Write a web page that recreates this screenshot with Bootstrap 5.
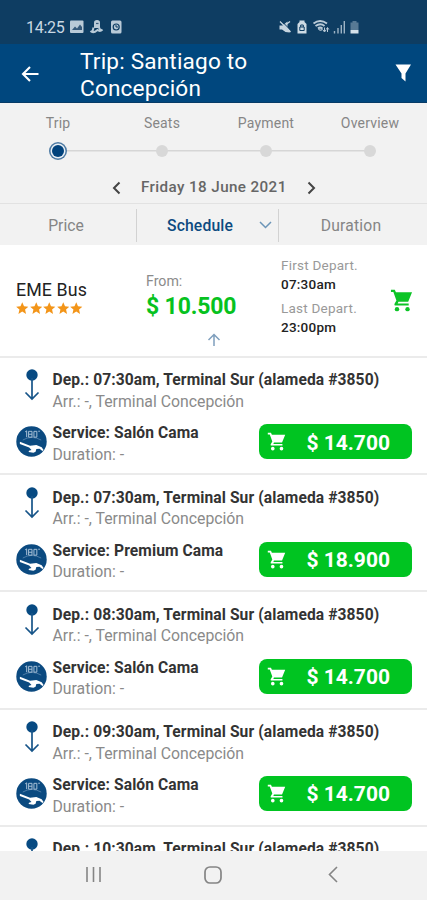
<!DOCTYPE html>
<html lang="en">
<head>
<meta charset="utf-8">
<meta name="viewport" content="width=device-width, initial-scale=1">
<title>Trip: Santiago to Concepción</title>
<link href="https://cdn.jsdelivr.net/npm/bootstrap@5.3.0/dist/css/bootstrap.min.css" rel="stylesheet">
<style>
  body { font-family: Roboto, "Liberation Sans", sans-serif; color: #333; background: #fff; }
  svg { display: block; flex: none; }
  .screen { width: 427px; height: 900px; }
  .status-bar { height: 44px; background: #0e3d62; color: #c9d8e3; padding: 11px 0 0 26px; }
  .clock { font-size: 16px; line-height: 33px; width: 44px; white-space: nowrap; letter-spacing: -.3px; }
  .app-bar { height: 59px; background: #00477e; border-bottom: 1px solid #073b66; padding: 0 15px 0 21px; color: #fff; }
  .app-title { font-size: 22.6px; line-height: 27px; margin: 4px 0 0 40px; font-weight: 400; width: 200px; white-space: nowrap; letter-spacing: .18px; }
  .steps-area { height: 101px; background: #f2f2f2; border-bottom: 1px solid #e2e2e2; }
  .steps { height: 69px; padding: 11px 5px 0 6px; }
  .step { width: 104px; font-size: 14px; line-height: 18px; color: #868686; letter-spacing: .2px; }
  .step-track { height: 20px; margin-top: 9px; background: linear-gradient(#d6d6d6, #d6d6d6) center / 100% 1.5px no-repeat; }
  .step:first-child .step-track { background-size: 50% 1.5px; background-position: right center; }
  .step:last-child .step-track { background-size: 50% 1.5px; background-position: left center; }
  .dot { width: 12px; height: 12px; background: #d8d8d8; }
  .dot-on { width: 12px; height: 12px; background: #00427c; box-shadow: 0 0 0 1.5px #e8eef4, 0 0 0 3px #4d7aa3; }
  .date-row { height: 31px; padding-left: 111px; font-size: 15.2px; font-weight: 500; color: #666; letter-spacing: .4px; }
  .date-text { width: 146px; margin: 0 19px 0 19px; white-space: nowrap; }
  .tabs { height: 41px; background: #f2f2f2; font-size: 15.7px; color: #858585; padding-top: 2px; }
  .tab-price { width: 136px; padding-right: 4px; }
  .tab-schedule { width: 143px; height: 33px; border-left: 1px solid #d2d2d2; border-right: 1px solid #d2d2d2; color: #0d4a80; font-weight: 500; padding: 0 6px 0 30px; }
  .schedule-label { letter-spacing: .15px; }
  .tab-duration { padding-right: 4px; letter-spacing: .2px; }
  .tab-schedule svg { margin-bottom: 1px; }
  .company { height: 113px; border-bottom: 2px solid #ebebeb; }
  .company-name { width: 146px; padding: 34px 0 0 16px; color: #222; font-size: 17.800px; line-height: 21px; letter-spacing: .1px; }
  .stars { padding: 2px 0 0 0; gap: 1px; }
  .from { width: 135px; padding-top: 27px; color: #8b8b8b; font-size: 14.2px; line-height: 18px; }
  .from-price { font-size: 23px; line-height: 34px; font-weight: 700; color: #06c220; white-space: nowrap; letter-spacing: -.15px; }
  .up-arrow { margin-top: 9px; }
  .times { width: 109px; padding-top: 11px; font-size: 13.500px; line-height: 19px; color: #999; letter-spacing: .23px; }
  .times strong { display: block; font-weight: 500; color: #222; }
  .times div + div { margin-top: 5px; }
  .trips { height: 494px; }
  .trip { height: 117.3px; border-bottom: 2px solid #ebebeb; padding: 11.5px 15px 0 16px; }
  .line-strong { font-weight: 700; font-size: 15.600px; line-height: 22.5px; color: #333; white-space: nowrap; letter-spacing: .09px; }
  .line-soft { font-size: 15.8px; line-height: 20.5px; color: #8a8a8a; white-space: nowrap; }
  .glyph-col { width: 36.5px; flex: none; }
  .service { margin-top: 10px; }
  .buy { width: 153px; height: 35px; border-radius: 8px; background: #00c421; color: #fff; font-size: 21px; font-weight: 700; padding: 0 22px 0 8px; margin-top: 2px; }
  .buy:hover { background: #00b01e; color: #fff; }
  .amount { padding-top: 3px; }
  .nav-bar { height: 49px; background: #f2f2f2; padding: 0 89px 2px 85px; }
  .home-key { margin-right: 5px; }
</style>
<script src="https://cdn.jsdelivr.net/npm/bootstrap@5.3.0/dist/js/bootstrap.bundle.min.js"></script>
</head>
<body>
<svg width="0" height="0" class="position-absolute">
  <symbol id="cart" viewBox="0 0 24 24"><path fill="currentColor" d="M1 .8h4l1.200 2.700H23l-4 9.700H8.800L8 15h11.500v2.200H6c-1.500 0-1.700-1.200-1.100-2.200l1.800-3L3.500 3H1z"/><circle cx="7.300" cy="21" r="2.300" fill="currentColor"/><circle cx="18.300" cy="21" r="2.300" fill="currentColor"/></symbol>
  <symbol id="star" viewBox="0 0 24 24"><path fill="#f39519" d="M12 .5l3.400 7.800 8.300.7-6.300 5.500 1.900 8.300L12 18.400l-7.300 4.400 1.900-8.300L.3 9l8.300-.7z"/></symbol>
  <symbol id="route" viewBox="0 0 16 32"><circle cx="8" cy="6" r="5.700" fill="#074a82"/><path d="M8 9v20M1.500 23.500 8 30l6.500-6.500" fill="none" stroke="#175589" stroke-width="1.700"/></symbol>
  <symbol id="recline" viewBox="0 0 32 32"><circle cx="16" cy="16" r="15.700" fill="#0b4a80"/><path d="M7 14.500Q16 9 26 14.500" fill="none" stroke="#4f7ea8" stroke-width="1"/><path d="M9.500 6l1.500-1v6.500M13 5.500h3.500v6H13zM13 8.500h3.500M18.500 5.500H21.500v6h-3z" fill="none" stroke="#a9c2d8" stroke-width="1"/><circle cx="23.800" cy="5.500" r=".8" fill="#a9c2d8"/><path d="M4 16.200l10.500 4.300 6.500-1 5.500 2.500 2 2.800-1.200.9-3-2.200-3.300.2-.8 3-2.200.8-5-.6.4-1.400 2.600-.6-2.400-2.600L4 18.500z" fill="#fff"/></symbol>
</svg>

<div class="screen d-flex flex-column overflow-hidden">
  <div class="status-bar d-flex">
    <div class="clock">14:25</div>
    <svg width="357" height="33" viewBox="70 11 357 33">
      <rect x="70" y="20.500" width="13.500" height="12.500" rx="1" fill="#b9cad7"/><path d="M72 30l3-3.500 2 2 3-4 2 2.500v3z" fill="#35597a"/>
      <path d="M94 27v-4.500q0-2.500 3-2.500t3 2.500V28h-6z" fill="#b9cad7"/><path d="M96 23.500h2.500" stroke="#35597a" stroke-width="1.200"/><path d="M90.500 31q2 2 5 .5l2-1.500q2.500 2 5-.5M93.500 27.500l-1 4M99 27.500l1.500 3" fill="none" stroke="#b9cad7" stroke-width="2"/>
      <rect x="111" y="20.500" width="10.500" height="13" rx="1.500" fill="#b9cad7"/><circle cx="116.200" cy="27" r="3" fill="none" stroke="#0e3d62" stroke-width="1.200"/><path d="M116 25v2h2" stroke="#0e3d62" fill="none"/>
      <path d="M279.500 25.500h3l5-4v5.500l3 4-1 1.500-4-.5-3.500-2.500h-2.500z" fill="#c5d4df"/><path d="M280 21.500l10.500 10.500M286 24.500l4-3" stroke="#c5d4df" stroke-width="1.300"/><path d="M281.500 21l9.500 9.500" stroke="#0e3d62"/>
      <path d="M297.500 24l2-2v-1.500h5V22l2 2v9.500h-9z" fill="#cedbe4"/><path d="M299.800 27h4.400v3.500h-4.400zM300.700 27v-2h2.600v2" fill="none" stroke="#0e3d62"/>
      <path d="M313.500 23.500q6.500-5 13.500 0M315.500 26q5-3.500 9 0M318 28.500q2-1.800 4.500 0" fill="none" stroke="#b9cad7" stroke-width="1.900"/><path d="M320.500 31l-2-2h4zM324.500 27.500v4M323 30l1.500 2 1.500-2M327.500 32v-4M326.200 29.500l1.300-2 1.300 2" fill="none" stroke="#b9cad7"/>
      <path d="M334.500 31v2.500M338 28v5.500M341.300 25v8.500M344.300 21v12.500" stroke="#9db3c4" stroke-width="1.400"/>
      <path d="M350.500 22.500h2v-1.500h4v1.500h2V30h-8z" fill="#587a94"/><path d="M350.500 30h8v3.500h-8z" fill="#d6e1e9"/>
    </svg>
  </div>

  <header class="app-bar d-flex align-items-center">
    <svg class="mt-1" width="19" height="18" viewBox="0 0 19 18"><path d="M17.500 8H2M9 1 2 8l7 7" fill="none" stroke="#fff" stroke-width="2.100"/></svg>
    <h1 class="app-title mb-0">Trip: Santiago to<br>Concepción</h1>
    <svg class="ms-auto" width="17" height="18" viewBox="0 0 17 18"><path d="M.5.5h15.500L10.500 9.500v8L6.500 14V9.500z" fill="#fff"/></svg>
  </header>

  <section class="steps-area">
    <div class="steps d-flex text-center">
      <div class="step">Trip<div class="step-track d-flex align-items-center justify-content-center"><span class="dot-on rounded-circle"></span></div></div>
      <div class="step">Seats<div class="step-track d-flex align-items-center justify-content-center"><span class="dot rounded-circle"></span></div></div>
      <div class="step">Payment<div class="step-track d-flex align-items-center justify-content-center"><span class="dot rounded-circle"></span></div></div>
      <div class="step">Overview<div class="step-track d-flex align-items-center justify-content-center"><span class="dot rounded-circle"></span></div></div>
    </div>
    <div class="date-row d-flex align-items-center">
      <svg width="11" height="14" viewBox="0 0 11 14"><path d="M8.500 1.500 3 7l5.500 5.500" fill="none" stroke="#444" stroke-width="2"/></svg>
      <div class="date-text">Friday 18 June 2021</div>
      <svg width="11" height="14" viewBox="0 0 11 14"><path d="M2.500 1.500 8 7l-5.500 5.500" fill="none" stroke="#444" stroke-width="2"/></svg>
    </div>
  </section>

  <div class="tabs d-flex align-items-center">
    <div class="tab-price text-center">Price</div>
    <div class="tab-schedule d-flex align-items-center justify-content-between"><span class="schedule-label">Schedule</span>
      <svg width="13" height="8" viewBox="0 0 13 8"><path d="M1 1l5.500 5.500L12 1" fill="none" stroke="#6b95b8" stroke-width="1.500"/></svg>
    </div>
    <div class="tab-duration flex-fill text-center">Duration</div>
  </div>

  <section class="company d-flex">
    <div class="company-name">EME Bus
      <div class="stars d-flex">
        <svg width="12.500" height="12.500"><use href="#star"/></svg><svg width="12.500" height="12.500"><use href="#star"/></svg><svg width="12.500" height="12.500"><use href="#star"/></svg><svg width="12.500" height="12.500"><use href="#star"/></svg><svg width="12.500" height="12.500"><use href="#star"/></svg>
      </div>
    </div>
    <div class="from">From:
      <div class="from-price">$ 10.500</div>
      <svg class="up-arrow mx-auto" width="14" height="14" viewBox="0 0 14 14"><path d="M7 13V2M1.500 7 7 1.500 12.500 7" fill="none" stroke="#7f9fbd" stroke-width="1.500"/></svg>
    </div>
    <div class="times"><div>First Depart.<strong>07:30am</strong></div><div>Last Depart.<strong>23:00pm</strong></div></div>
    <svg class="align-self-center" width="23" height="23" color="#0cc426"><use href="#cart"/></svg>
  </section>

  <main class="trips overflow-hidden">
    <article class="trip">
      <div class="d-flex"><div class="glyph-col"><svg class="mx-2" width="16" height="32"><use href="#route"/></svg></div><div><div class="line-strong">Dep.: 07:30am, Terminal Sur (alameda #3850)</div><div class="line-soft">Arr.: -, Terminal Concepción</div></div></div>
      <div class="service d-flex"><div class="glyph-col"><svg class="mt-1" width="31" height="31"><use href="#recline" width="31" height="31"/></svg></div><div><div class="line-strong">Service: Salón Cama</div><div class="line-soft">Duration: -</div></div>
        <button class="buy btn border-0 d-flex align-items-center justify-content-between ms-auto"><svg width="19" height="19"><use href="#cart"/></svg><span class="amount">$ 14.700</span></button></div>
    </article>
    <article class="trip">
      <div class="d-flex"><div class="glyph-col"><svg class="mx-2" width="16" height="32"><use href="#route"/></svg></div><div><div class="line-strong">Dep.: 07:30am, Terminal Sur (alameda #3850)</div><div class="line-soft">Arr.: -, Terminal Concepción</div></div></div>
      <div class="service d-flex"><div class="glyph-col"><svg class="mt-1" width="31" height="31"><use href="#recline" width="31" height="31"/></svg></div><div><div class="line-strong">Service: Premium Cama</div><div class="line-soft">Duration: -</div></div>
        <button class="buy btn border-0 d-flex align-items-center justify-content-between ms-auto"><svg width="19" height="19"><use href="#cart"/></svg><span class="amount">$ 18.900</span></button></div>
    </article>
    <article class="trip">
      <div class="d-flex"><div class="glyph-col"><svg class="mx-2" width="16" height="32"><use href="#route"/></svg></div><div><div class="line-strong">Dep.: 08:30am, Terminal Sur (alameda #3850)</div><div class="line-soft">Arr.: -, Terminal Concepción</div></div></div>
      <div class="service d-flex"><div class="glyph-col"><svg class="mt-1" width="31" height="31"><use href="#recline" width="31" height="31"/></svg></div><div><div class="line-strong">Service: Salón Cama</div><div class="line-soft">Duration: -</div></div>
        <button class="buy btn border-0 d-flex align-items-center justify-content-between ms-auto"><svg width="19" height="19"><use href="#cart"/></svg><span class="amount">$ 14.700</span></button></div>
    </article>
    <article class="trip">
      <div class="d-flex"><div class="glyph-col"><svg class="mx-2" width="16" height="32"><use href="#route"/></svg></div><div><div class="line-strong">Dep.: 09:30am, Terminal Sur (alameda #3850)</div><div class="line-soft">Arr.: -, Terminal Concepción</div></div></div>
      <div class="service d-flex"><div class="glyph-col"><svg class="mt-1" width="31" height="31"><use href="#recline" width="31" height="31"/></svg></div><div><div class="line-strong">Service: Salón Cama</div><div class="line-soft">Duration: -</div></div>
        <button class="buy btn border-0 d-flex align-items-center justify-content-between ms-auto"><svg width="19" height="19"><use href="#cart"/></svg><span class="amount">$ 14.700</span></button></div>
    </article>
    <article class="trip">
      <div class="d-flex"><div class="glyph-col"><svg class="mx-2" width="16" height="32"><use href="#route"/></svg></div><div><div class="line-strong">Dep.: 10:30am, Terminal Sur (alameda #3850)</div></div></div>
    </article>
  </main>

  <nav class="nav-bar d-flex align-items-center justify-content-between">
    <svg width="17" height="17" viewBox="0 0 17 17"><path d="M2 1v15M8.500 1v15M15 1v15" stroke="#858585" stroke-width="1.600"/></svg>
    <svg class="home-key" width="18" height="18" viewBox="0 0 18 18"><rect x="1" y="1" width="16" height="16" rx="5" fill="none" stroke="#858585" stroke-width="1.700"/></svg>
    <svg width="10" height="17" viewBox="0 0 10 17"><path d="M9 1 1.500 8.500 9 16" fill="none" stroke="#858585" stroke-width="1.600"/></svg>
  </nav>
</div>
</body>
</html>
